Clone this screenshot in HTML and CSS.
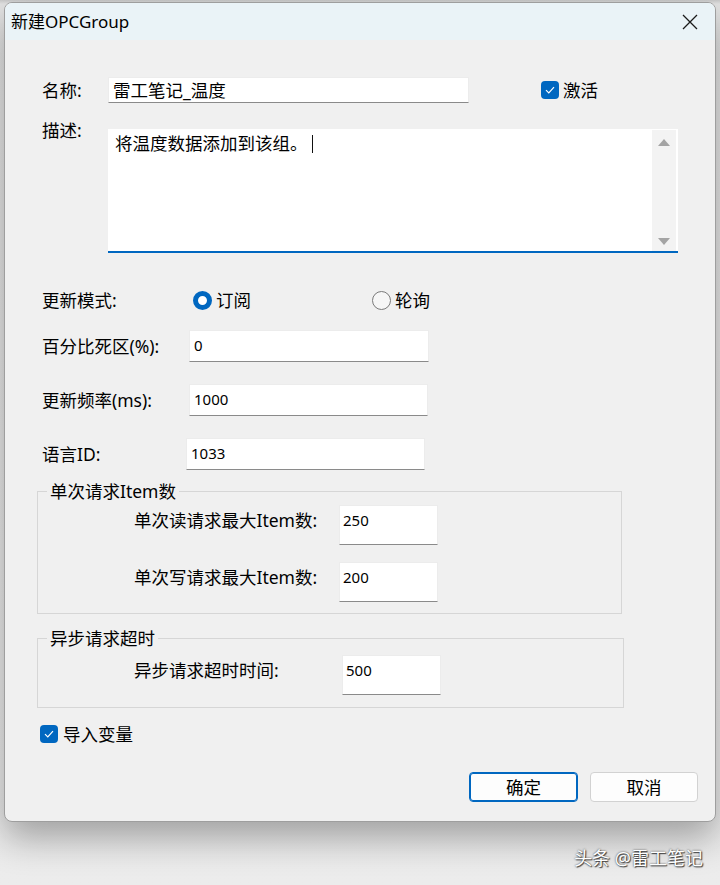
FILE: index.html
```html
<!DOCTYPE html>
<html lang="zh-CN">
<head>
  <meta charset="UTF-8">
  <title>新建OPCGroup</title>
  <link rel="stylesheet" href="styles.css">
</head>
<body>

<div class="window">
  <div class="titlebar">
    <span class="title">新建OPCGroup</span>
    <svg class="close" width="16" height="16" viewBox="0 0 16 16">
      <path d="M1 1 L15 15 M15 1 L1 15" stroke="#1a1a1a" stroke-width="1.3" fill="none"/>
    </svg>
  </div>

  <div class="content">
    <div class="row row-name">
      <span class="lbl lbl-name">名称:</span>
      <div class="edit edit-name">雷工笔记_温度</div>
      <label class="check check-active">
        <span class="box"><svg width="18" height="18" viewBox="0 0 18 18"><path d="M5 9.2 L7.8 12 L13 6.2" stroke="#fff" stroke-width="1.2" fill="none"/></svg></span>
        激活
      </label>
    </div>

    <div class="row row-desc">
      <span class="lbl lbl-name">描述:</span>
      <div class="memo">
        <div class="memo-text">将温度数据添加到该组。<span class="caret"></span></div>
        <div class="memo-scroll">
          <span class="arrow-up"></span>
          <span class="arrow-down"></span>
        </div>
      </div>
    </div>

    <div class="row row-mode">
      <span class="lbl lbl-mode">更新模式:</span>
      <label class="radio radio-first"><span class="dot on"></span>订阅</label>
      <label class="radio"><span class="dot"></span>轮询</label>
    </div>

    <div class="row row-field">
      <span class="lbl lbl-wide">百分比死区(%):</span>
      <div class="edit edit-num w240">0</div>
    </div>

    <div class="row row-field gap22">
      <span class="lbl lbl-wide">更新频率(ms):</span>
      <div class="edit edit-num w239">1000</div>
    </div>

    <div class="row row-field gap22">
      <span class="lbl lbl-lang">语言ID:</span>
      <div class="edit edit-num w239">1033</div>
    </div>

    <fieldset class="group group-items">
      <legend>单次请求Item数</legend>
      <div class="grow first">
        <span class="lbl lbl-group">单次读请求最大Item数:</span>
        <div class="edit edit-tall">250</div>
      </div>
      <div class="grow second">
        <span class="lbl lbl-group">单次写请求最大Item数:</span>
        <div class="edit edit-tall">200</div>
      </div>
    </fieldset>

    <fieldset class="group group-timeout">
      <legend>异步请求超时</legend>
      <div class="grow first-timeout">
        <span class="lbl lbl-timeout">异步请求超时时间:</span>
        <div class="edit edit-tall">500</div>
      </div>
    </fieldset>

    <label class="check check-import">
      <span class="box"><svg width="18" height="18" viewBox="0 0 18 18"><path d="M5 9.2 L7.8 12 L13 6.2" stroke="#fff" stroke-width="1.2" fill="none"/></svg></span>
      导入变量
    </label>

    <div class="buttons">
      <button class="btn btn-default">确定</button>
      <button class="btn">取消</button>
    </div>
  </div>
</div>

<div class="footer">头条 @雷工笔记</div>

</body>
</html>
```

FILE: styles.css
```css
body {
  margin: 0;
  padding: 2px 0 0 4px;
  width: 716px;
  height: 883px;
  overflow: hidden;
  background: linear-gradient(180deg, #c8c8c8 0, #e4e4e4 4px, #ececec 100%);
  font-family: "Noto Sans", "Noto Sans CJK SC", sans-serif;
  font-size: 17.5px;
  color: #000;
}
.window {
  width: 710px;
  height: 818px;
  border: 1px solid #9e9e9e;
  border-radius: 8px;
  background: #f0f0f0;
  box-shadow: 0 16px 36px rgba(0,0,0,0.32);
  overflow: hidden;
  display: flex;
  flex-direction: column;
  position: relative;
  z-index: 1;
}
.titlebar {
  height: 37px;
  flex: none;
  background: #eaf3f7;
  display: flex;
  align-items: center;
  justify-content: space-between;
  padding: 0 17px 0 6px;
}
.title {
  line-height: 24px;
  font-size: 17px;
}
.content {
  flex: 1;
  display: flex;
  flex-direction: column;
  padding: 0 17px 19px 37px;
}
.row {
  display: flex;
  align-items: center;
}
.lbl {
  flex: none;
  line-height: 24px;
  white-space: nowrap;
}
.edit {
  flex: none;
  box-sizing: border-box;
  background: #fff;
  border: 1px solid #ececec;
  border-bottom-color: #8a8a8a;
  white-space: nowrap;
}

/* name + description */
.row-name {
  margin-top: 37px;
  height: 26px;
}
.lbl-name {
  width: 66px;
}
.edit-name {
  width: 361px;
  height: 26px;
  line-height: 24px;
  padding-left: 4px;
}
.check {
  display: flex;
  align-items: center;
  line-height: 24px;
}
.check .box {
  width: 18px;
  height: 18px;
  border-radius: 4px;
  background: #0067c0;
  display: flex;
}
.check-active {
  margin-left: 72px;
  gap: 4px;
}
.row-desc {
  margin-top: 15px;
  align-items: flex-start;
}
.memo {
  margin-top: 11px;
  width: 570px;
  height: 124px;
  box-sizing: border-box;
  background: #fff;
  border-bottom: 2px solid #0067c0;
  display: flex;
}
.memo-text {
  flex: 1;
  padding: 2px 7px;
  line-height: 24px;
}
.caret {
  display: inline-block;
  width: 1px;
  height: 18px;
  background: #111;
  margin-left: 4px;
  vertical-align: -3px;
}
.memo-scroll {
  width: 24px;
  margin: 1px 2px 0 0;
  background: #f3f3f3;
  display: flex;
  flex-direction: column;
  justify-content: space-between;
  align-items: center;
  padding: 9px 0 6px;
}
.arrow-up, .arrow-down {
  width: 0;
  height: 0;
  border-left: 6px solid transparent;
  border-right: 6px solid transparent;
}
.arrow-up {
  border-bottom: 7px solid #a4a4a4;
}
.arrow-down {
  border-top: 7px solid #a4a4a4;
}

/* update mode */
.row-mode {
  margin-top: 35px;
  height: 24px;
}
.lbl-mode {
  width: 151px;
}
.radio {
  display: flex;
  align-items: center;
  gap: 4px;
  line-height: 24px;
}
.radio-first {
  width: 179px;
}
.dot {
  width: 19px;
  height: 19px;
  box-sizing: border-box;
  border-radius: 50%;
  border: 1.5px solid #7a7a7a;
  background: #f6f6f6;
}
.dot.on {
  border: 5.5px solid #0067c0;
  background: #fff;
}

/* numeric fields */
.row-field {
  margin-top: 18px;
  height: 32px;
}
.gap22 {
  margin-top: 22px;
}
.lbl-wide {
  width: 147px;
}
.lbl-lang {
  width: 144px;
}
.edit-num {
  height: 32px;
  line-height: 28px;
  padding-left: 4px;
  font-size: 15px;
}
.w240 {
  width: 240px;
}
.w239 {
  width: 239px;
}

/* group boxes */
.group {
  margin: 9px 0 0 -5px;
  padding: 0 0 11px 0;
  border: 1px solid #d6d6d6;
  min-width: 0;
}
.group-items {
  width: 585px;
  box-sizing: border-box;
}
.group-timeout {
  width: 587px;
  box-sizing: border-box;
  margin-top: 12px;
  padding-bottom: 12px;
}
.group legend {
  margin-left: 9px;
  padding: 0 3px;
  line-height: 24px;
}
.grow {
  display: flex;
  align-items: flex-start;
  height: 40px;
  padding-left: 96px;
}
.grow .lbl {
  margin-top: 3px;
}
.first {
  margin-top: 2px;
}
.second {
  margin-top: 17px;
}
.first-timeout {
  margin-top: 5px;
}
.lbl-group {
  width: 205px;
}
.lbl-timeout {
  width: 208px;
}
.edit-tall {
  width: 99px;
  height: 40px;
  padding: 2px 0 0 3px;
  line-height: 24px;
  font-size: 15px;
}

/* bottom */
.check-import {
  margin: 14px 0 0 -2px;
  gap: 5px;
}
.buttons {
  margin-top: auto;
  display: flex;
  justify-content: flex-end;
  gap: 12px;
}
.btn {
  width: 108px;
  height: 30px;
  border: 1px solid #d2d2d2;
  border-radius: 4px;
  background: #fdfdfd;
  font-family: inherit;
  font-size: 17.5px;
  color: #000;
  padding: 0;
  line-height: 24px;
}
.btn-default {
  width: 109px;
  border-color: #0067c0;
  box-shadow: inset 0 0 0 1px #0067c0;
}
.footer {
  height: 61px;
  display: flex;
  align-items: center;
  justify-content: flex-end;
  padding: 9px 17px 0 0;
  box-sizing: border-box;
  font-size: 18px;
  color: #fff;
  text-shadow: 0 0 2px #333, 1px 1px 1px #444;
  position: relative;
  z-index: 2;
}
```
